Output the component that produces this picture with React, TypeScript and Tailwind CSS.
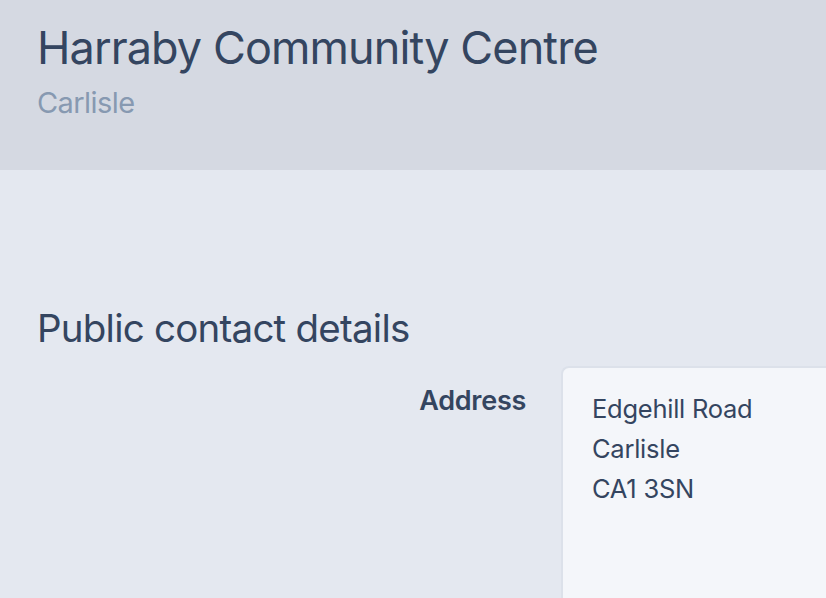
export default function App() {
  return (
    <div className="h-[598px] w-[826px] overflow-hidden bg-[#e4e8f0] text-[#344560]" style={{ fontFamily: 'Inter, "Noto Sans", sans-serif' }}>
      <header className="h-[170px] bg-[#d5d9e2] pl-[37px] pt-[21px]">
        <h1 className="text-[45px] leading-[54px] tracking-[-0.02em] font-normal">Harraby Community Centre</h1>
        <p className="mt-[10px] text-[29px] leading-[36px] tracking-[-0.02em] text-[#8799b1]">Carlisle</p>
      </header>
      <main className="pl-[37px] pt-[134px]">
        <h2 className="text-[38.5px] leading-[48px] tracking-[-0.02em]">Public contact details</h2>
        <div className="mt-[14px] flex gap-[35px]">
          <div className="w-[489px] pt-[19px] text-right text-[27px] leading-[32px] font-semibold tracking-[-0.01em]">Address</div>
          <div className="h-[260px] flex-1 rounded-l-[8px] border-2 border-r-0 border-[#dce1ea] bg-[#f4f6fa] pl-[29px] pt-[21px] text-[25.5px] leading-[40px] tracking-[-0.01em]">
            <div>Edgehill Road</div>
            <div>Carlisle</div>
            <div>CA1 3SN</div>
          </div>
        </div>
      </main>
    </div>
  );
}
